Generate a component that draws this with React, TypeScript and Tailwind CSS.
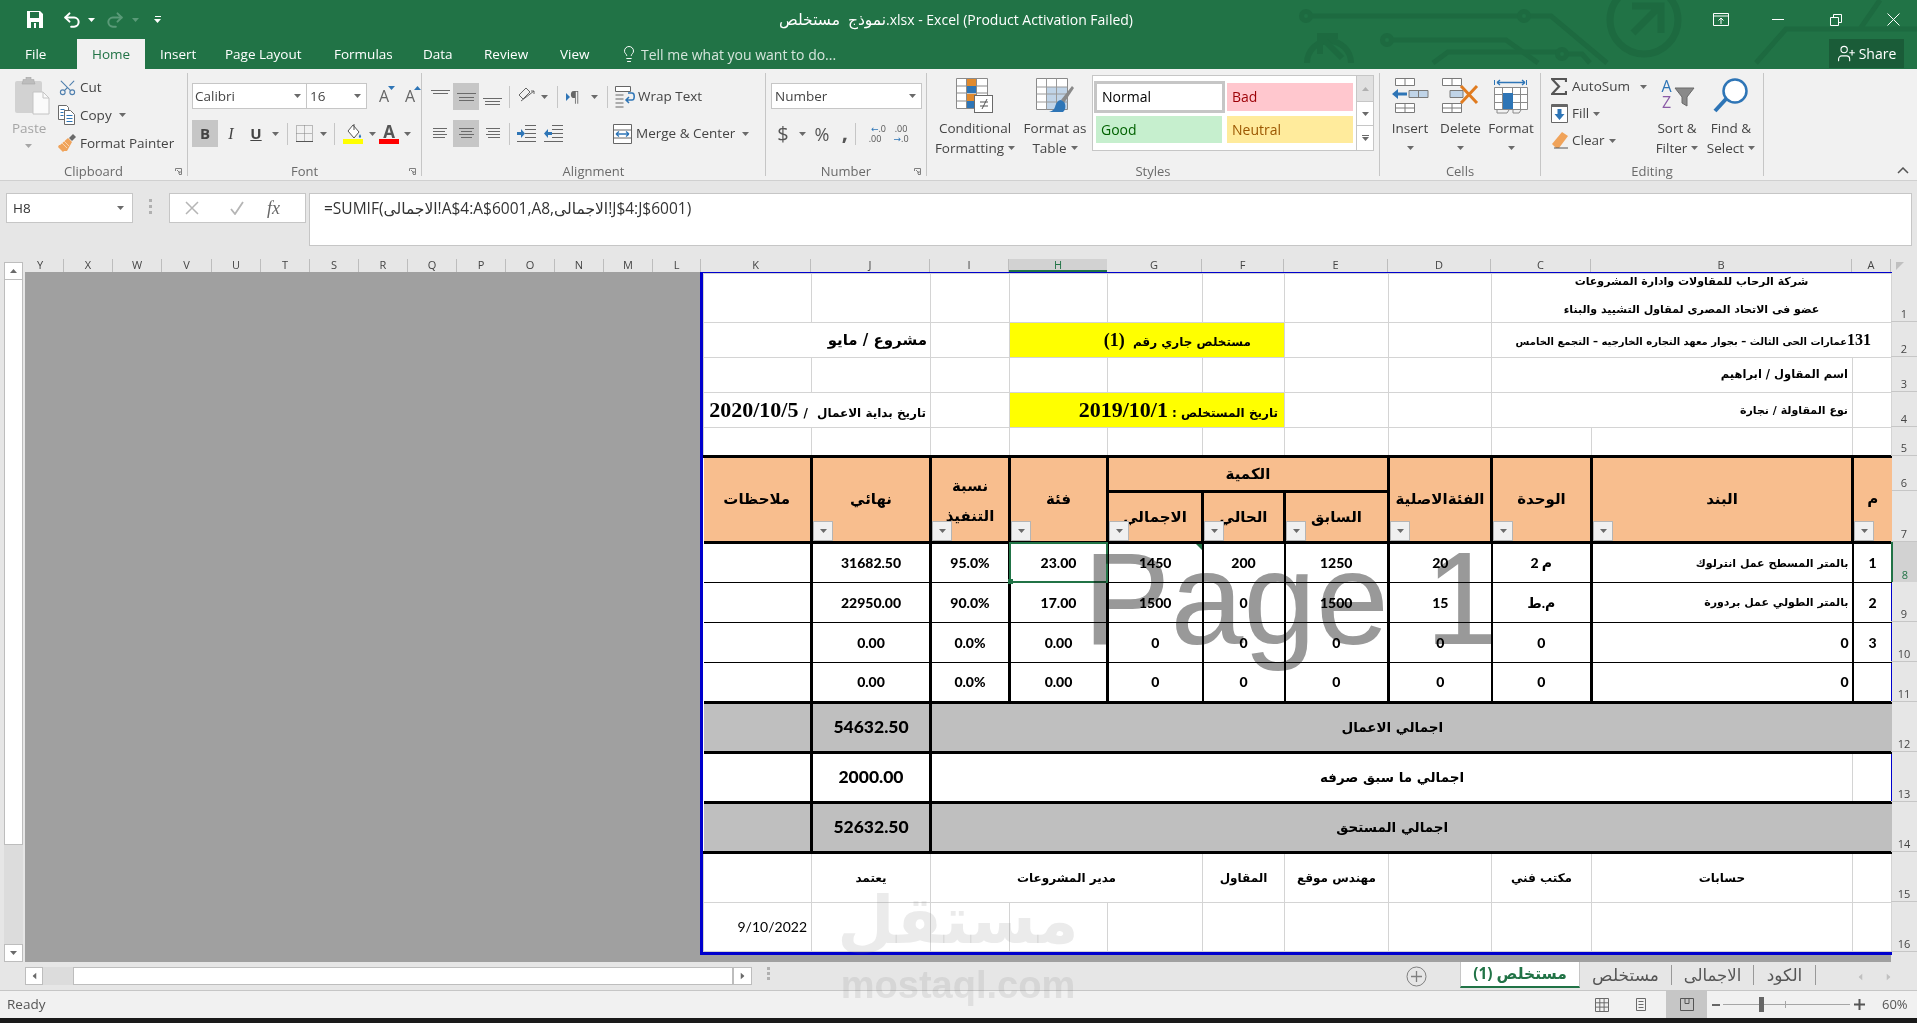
import React from 'react'
import { Lightbulb, Redo2, Scissors, Undo2, UserPlus } from 'lucide-react'

const Caret = ({ className = '', color = '#6a6a6a' }: { className?: string; color?: string }) => (
  <svg width="7" height="4" viewBox="0 0 7 4" className={`shrink-0 ${className}`}>
    <path d="M0 0h7L3.5 4z" fill={color} />
  </svg>
)

const Launcher = () => (
  <svg width="7" height="7" viewBox="0 0 7 7" className="absolute right-[5px] bottom-[1px]">
    <path d="M.5 3V.5H6.5V6.5H4M2 2l3 3M5 3v2H3" fill="none" stroke="#808080" />
  </svg>
)

const Sep = ({ className = '' }: { className?: string }) => <div className={`w-px bg-[#c6c6c6] h-[22px] shrink-0 ${className}`} />

// horizontal strokes of the align buttons
const Lines = ({ rows }: { rows: number[][] }) => (
  <svg width="19" height="18" viewBox="0 0 19 18">
    {rows.map((r, i) => (
      <path key={i} d={`M${r[1]} ${r[0]}.5H${r[2]}`} stroke="#6a6a6a" />
    ))}
  </svg>
)

const Group = ({ label, className, launcher, children }: { label: string; className: string; launcher?: boolean; children: React.ReactNode }) => (
  <div className={`relative flex flex-col h-[103px] border-r border-[#c6c6c6] shrink-0 ${className}`}>
    <div className="flex-1 flex min-h-0">{children}</div>
    <div className="h-[10px] leading-[10px] text-center text-[13px] text-[#6a6a6a]">{label}</div>
    {launcher && <Launcher />}
  </div>
)

const BigBtn = ({ icon, lines, className, caretLine }: { icon: React.ReactNode; lines: string[]; className: string; caretLine?: boolean }) => (
  <div className={`flex flex-col items-center shrink-0 text-[13.5px] text-[#444] ${className}`}>
    <div className="h-[45px] pt-[5px] flex items-start justify-center">{icon}</div>
    <div className="h-[20px] leading-[20px] whitespace-nowrap">{lines[0]}</div>
    <div className="h-[20px] flex items-center gap-[4px] whitespace-nowrap">
      {lines[1]}
      {caretLine && <Caret />}
    </div>
  </div>
)

const CondIcon = () => (
  <svg width="38" height="35" viewBox="0 0 38 35">
    <path d="M.5.5h31v30H.5zM.5 8h31M.5 15h31M.5 23h31M10.5.5v30M20.5.5v30" fill="#fff" stroke="#8a8a8a" />
    <rect x="11" y="1" width="9" height="7" fill="#e08a2e" />
    <rect x="11" y="8" width="9" height="7" fill="#2e75b6" />
    <rect x="11" y="16" width="9" height="7" fill="#e08a2e" />
    <rect x="11" y="23" width="9" height="7" fill="#2e75b6" />
    <rect x="18.5" y="17.5" width="18" height="17" fill="#fff" stroke="#6a6a6a" />
    <path d="M24 24h8M24 28h8M31 21l-5 10" stroke="#555" fill="none" />
  </svg>
)

const TableIcon = () => (
  <svg width="38" height="35" viewBox="0 0 38 35">
    <path d="M.5.5h31v31H.5z" fill="#fff" stroke="#8a8a8a" />
    <rect x="11" y="9" width="20" height="22" fill="#c0d4e8" />
    <path d="M.5 9h31M.5 16h31M.5 24h31M10.5.5v31M20.5.5v31" stroke="#9a9a9a" fill="none" />
    <path d="M25 22L36 8l2 2-10 15z" fill="#8a8a8a" />
    <path d="M25 22c-3 0-5 3-6 7 -1 3-3 4-6 5h14c3-2 3-8 1-10z" fill="#2e75b6" />
  </svg>
)

const InsertIcon = () => (
  <svg width="37" height="35" viewBox="0 0 37 35">
    <path d="M3.5.5h19v7h-19zM13 .5v7M3.5 25.5h19v9h-19zM13 25.5v9M3.5 30h19" fill="#fff" stroke="#7a7a7a" />
    <path d="M17 12.5h19v7H17zM26.5 12.5v7" fill="#c0d4e8" stroke="#7a7a7a" />
    <path d="M0 16l6-5v3.5h9v3H6V21z" fill="#2e75b6" />
  </svg>
)

const DeleteIcon = () => (
  <svg width="37" height="35" viewBox="0 0 37 35">
    <path d="M.5.5h19v7H.5zM10 .5v7M.5 25.5h19v9H.5zM10 25.5v9M.5 30h19" fill="#fff" stroke="#7a7a7a" />
    <path d="M8 12.5h13v7H8z" fill="#c0d4e8" stroke="#7a7a7a" />
    <path d="M19 8l16 17M35 8L19 25" stroke="#e07b1f" strokeWidth="3" />
  </svg>
)

const FormatIcon = () => (
  <svg width="36" height="36" viewBox="0 0 36 36">
    <path d="M1.5 2v5M33.5 2v5" stroke="#2e75b6" />
    <path d="M4 4.500h28M4 4.500l3-2.500M4 4.500l3 2.500M32 4.500l-3-2.500M32 4.500l-3 2.500" stroke="#2e75b6" fill="none" strokeWidth="1.300" />
    <path d="M1.500 9.500h33v22h-33zM1.500 16.500h33M1.500 24.500h33M9.500 9.500v22M19.500 9.500v22M27.500 9.500v22" fill="#fff" stroke="#8a8a8a" />
    <rect x="10" y="15" width="10" height="16" fill="#2e75b6" />
    <path d="M4 32v3h10l2-3M20 32v3h6l2-3" fill="none" stroke="#8a8a8a" />
  </svg>
)

const SortIcon = () => (
  <div className="flex w-[36px] h-[33px] relative">
    <div className="flex flex-col w-[15px] text-[16px] leading-[16px] text-center">
      <span className="text-[#2e75b6]">A</span>
      <span className="text-[#8a5ba6]">Z</span>
    </div>
    <svg width="21" height="21" viewBox="0 0 21 21" className="mt-[9px]">
      <path d="M1 1h19l-7 9v9l-5-3v-6z" fill="#8a8a8a" stroke="#6a6a6a" />
    </svg>
  </div>
)

const Paste = () => (
  <svg width="35" height="39" viewBox="0 0 35 39">
    <rect x="0" y="4" width="27" height="32" rx="2" fill="#d2d2d2" />
    <path d="M8 4V2.500h3V0h5v2.500h3V4l1 3H7z" fill="#bdbdbd" stroke="#aaa" strokeWidth=".6" />
    <path d="M18 15h10l6 6v16H18z" fill="#fafafa" stroke="#c4c4c4" />
    <path d="M28 15v6h6" fill="none" stroke="#c4c4c4" />
  </svg>
)

const CopyIcon = () => (
  <svg width="17" height="20" viewBox="0 0 17 20">
    <path d="M.5.5h8l2 2v3H6.500v9h-6z" fill="#fff" stroke="#6a6a6a" />
    <path d="M6.500 5.500h6l4 4v10h-10z" fill="#fff" stroke="#6a6a6a" />
    <path d="M2.500 4.500h4M2.500 7.500h3M2.500 10.500h3M8.500 10.500h6M8.500 13.500h6M8.500 16.500h6" stroke="#2e75b6" />
  </svg>
)

const Painter = () => (
  <svg width="18" height="18" viewBox="0 0 18 18">
    <path d="M11 4l3 3 4-4-3-3z" fill="#6a6a6a" />
    <path d="M10 4l4 4-5 9H6l-1 1-5-5 1-2h1z" fill="#f0a35a" />
    <path d="M4 9l5 5M6 7l5 5" stroke="#fbd3ab" />
  </svg>
)

const Undo = () => <Undo2 size={20} strokeWidth={2.4} color="#fff" />

const Circuit = () => (
  <svg viewBox="0 0 1917 69" width="1917" height="69" className="absolute inset-0 pointer-events-none">
    <g fill="none" stroke="#1d6a40" strokeWidth="5">
      <circle cx="1306" cy="16" r="4.500" />
      <path d="M1311 16H1520M1529 16H1551L1607 63" />
      <circle cx="1524" cy="16" r="4.500" />
      <circle cx="1387" cy="40" r="4.500" />
      <path d="M1392 40H1506L1538 63" />
      <path d="M1433 63L1448 52H1557M1567 54H1582L1590 63" />
      <circle cx="1562" cy="54" r="4.500" />
      <circle cx="1644" cy="20" r="34" strokeWidth="7" />
      <path d="M1633 33L1660 6M1632 6H1661V33" strokeWidth="7" />
      <path d="M1307 63A21 21 0 1 1 1351 63" strokeWidth="6" />
      <path d="M1342 58L1320 36M1320 54V36H1338" strokeWidth="6" />
      <path d="M1756 63L1786 29H1917M1860 29L1880 0" />
    </g>
  </svg>
)

const TitleBar = () => (
  <div className="relative h-[69px] bg-[#217346] text-white shrink-0">
    <Circuit />
    <div className="relative flex items-center h-[39px]">
      <svg width="16" height="17" viewBox="0 0 16 17" className="ml-[27px]">
        <path d="M0 0h13l3 3v14H0z" fill="#fff" />
        <rect x="3" y="1" width="9" height="6" fill="#217346" />
        <rect x="4" y="11" width="8" height="6" fill="#217346" />
        <rect x="7" y="12" width="2" height="5" fill="#fff" />
      </svg>
      <div className="ml-[19px]"><Undo /></div>
      <Caret color="#fff" className="ml-[6px]" />
      <div className="ml-[10px]"><Redo2 size={20} strokeWidth={2.4} color="#5a9a78" /></div>
      <Caret color="#5a9a78" className="ml-[7px]" />
      <div className="ml-[15px] flex flex-col items-center gap-[2px]">
        <div className="w-[6px] h-px bg-white" />
        <Caret color="#fff" />
      </div>
      <div className="ml-[618px] w-[360px] text-[14px] whitespace-nowrap">
        <span className="inline-block w-[107px] text-[15.5px] leading-none [word-spacing:4px]">نموذج مستخلص</span>.xlsx - Excel (Product Activation Failed)
      </div>
      <svg width="16" height="13" viewBox="0 0 16 13" className="ml-[574px]">
        <path d="M.5.5h15v12H.5zM.5 3h15M8 11V5M5.500 7.500L8 5l2.500 2.500" fill="none" stroke="#fff" />
      </svg>
      <div className="ml-[43px] w-[12px] h-px bg-white" />
      <svg width="12" height="12" viewBox="0 0 12 12" className="ml-[46px]">
        <path d="M.5 3.500h8v8h-8zM3.500 3.500V.5h8v8h-3" fill="none" stroke="#fff" />
      </svg>
      <svg width="13" height="13" viewBox="0 0 13 13" className="ml-[45px]">
        <path d="M.5.5l12 12M12.500.5l-12 12" stroke="#fff" />
      </svg>
    </div>
    <div className="relative flex items-start h-[30px] text-[13.5px]">
      <div className="w-[77px] h-[30px] pl-[25px] leading-[30px]">File</div>
      <div className="w-[68px] h-[30px] bg-[#f1f1f1] text-[#217346] text-center leading-[30px]">Home</div>
      <div className="w-[65px] pl-[15px] leading-[30px]">Insert</div>
      <div className="w-[109px] pl-[15px] leading-[30px]">Page Layout</div>
      <div className="w-[89px] pl-[15px] leading-[30px]">Formulas</div>
      <div className="w-[61px] pl-[15px] leading-[30px]">Data</div>
      <div className="w-[76px] pl-[15px] leading-[30px]">Review</div>
      <div className="w-[62px] pl-[15px] leading-[30px]">View</div>
      <div className="flex items-center w-[1222px] h-[30px] pl-[13px] gap-[3px] text-[#d5e5dc] text-[14px]">
        <Lightbulb size={18} strokeWidth={1.3} color="#fff" />
        <span>Tell me what you want to do...</span>
      </div>
      <div className="flex items-center justify-center gap-[3px] w-[75px] h-[29px] bg-[#1a5c38]">
        <UserPlus size={19} strokeWidth={1.4} color="#fff" />
        <span className="text-[14px]">Share</span>
      </div>
    </div>
  </div>
)

const Clipboard = () => (
  <Group label="Clipboard" launcher className="w-[188px]">
    <div className="w-[58px] flex flex-col pl-[15px] pt-[4px] shrink-0">
      <Paste />
      <div className="text-[13.5px] text-[#a6a6a6] leading-[20px] mt-[2px] -ml-[3px]">Paste</div>
      <Caret color="#a6a6a6" className="ml-[10px] mt-[6px]" />
    </div>
    <div className="flex flex-col text-[13.5px] text-[#444]">
      {[
        { label: 'Cut', icon: <Scissors size={19} strokeWidth={1.4} color="#4f7fae" className="-rotate-90" /> },
        { label: 'Copy', icon: <CopyIcon />, caret: true },
        { label: 'Format Painter', icon: <Painter /> },
      ].map((row) => (
        <div key={row.label} className="h-[28px] flex items-center whitespace-nowrap">
          <div className="w-[22px] flex justify-start">{row.icon}</div>
          <span>{row.label}</span>
          {row.caret && <Caret className="ml-[7px]" />}
        </div>
      ))}
    </div>
  </Group>
)

const FontGroup = () => (
  <Group label="Font" launcher className="w-[234px]">
    <div className="pl-[4px] pt-[10px] text-[#444]">
      <div className="flex items-center h-[26px]">
        <div className="w-[115px] h-[26px] bg-white border border-[#c6c6c6] flex items-center justify-between px-[2px] pr-[5px] text-[13.5px]">
          Calibri <Caret />
        </div>
        <div className="w-[60px] h-[26px] bg-white border border-l-0 border-[#c6c6c6] flex items-center justify-between px-[3px] pr-[5px] text-[13.5px]">
          16 <Caret />
        </div>
        <div className="ml-[8px] w-[18px] text-[16px] relative text-[#666] text-center">
          A<Caret color="#2e75b6" className="absolute right-[-2px] top-[2px]" />
        </div>
        <div className="ml-[8px] w-[18px] text-[16px] relative text-[#666] text-center">
          A<Caret color="#2e75b6" className="absolute right-[-2px] top-[2px] rotate-180" />
        </div>
      </div>
      <div className="flex items-center h-[27px] mt-[11px]">
        <div className="w-[26px] h-[27px] bg-[#c6c6c6] flex items-center justify-center font-bold text-[15px]">B</div>
        <div className="w-[26px] text-center italic text-[16px] font-['Liberation_Serif']">I</div>
        <div className="w-[24px] text-center font-bold text-[15px] underline">U</div>
        <Caret className="ml-[4px]" />
        <Sep className="ml-[8px]" />
        <svg width="17" height="17" viewBox="0 0 17 17" className="ml-[8px]">
          <path d="M.5.5h16v16H.5zM8.500.5v16M.5 8.500h16" fill="none" stroke="#808080" strokeDasharray="1 1" />
          <path d="M0 16.500h17" stroke="#555" />
        </svg>
        <Caret className="ml-[7px]" />
        <Sep className="ml-[7px]" />
        <div className="ml-[8px] w-[20px] flex flex-col items-center">
          <svg width="17" height="15" viewBox="0 0 17 15">
            <path d="M8 1l6 7-5 6-6-7z" fill="#fff" stroke="#555" />
            <path d="M15 10c1 2 2 3 0 4-2-1-1-2 0-4z" fill="#2e75b6" />
            <path d="M9 0v6" stroke="#555" />
          </svg>
          <div className="w-[20px] h-[5px] bg-[#ffff00]" />
        </div>
        <Caret className="ml-[6px]" />
        <div className="ml-[3px] w-[20px] flex flex-col items-center text-[17px] leading-[15px] font-bold text-[#555]">
          A
          <div className="w-[20px] h-[5px] bg-[#ff0000]" />
        </div>
        <Caret className="ml-[5px]" />
      </div>
    </div>
  </Group>
)

const Alignment = () => (
  <Group label="Alignment" className="w-[344px]">
    <div className="pl-[5px] pt-[10px] text-[13.5px] text-[#444]">
      <div className="flex items-center h-[27px]">
        <div className="w-[26px] flex justify-center"><Lines rows={[[2, 0, 19], [5, 2, 17]]} /></div>
        <div className="w-[26px] h-[27px] bg-[#c6c6c6] flex items-center justify-center"><Lines rows={[[5, 0, 19], [9, 2, 17], [12, 2, 17]]} /></div>
        <div className="w-[26px] flex justify-center"><Lines rows={[[10, 0, 19], [13, 2, 17], [16, 2, 17]]} /></div>
        <Sep className="ml-[4px]" />
        <svg width="20" height="19" viewBox="0 0 20 19" className="ml-[7px]">
          <path d="M2 8l7-7 4 4-7 7zM4 14L17 4M14 4h3v3" fill="none" stroke="#666" />
        </svg>
        <Caret className="ml-[4px]" />
        <Sep className="ml-[9px]" />
        <div className="ml-[8px] w-[16px] text-[15px] leading-none text-[#666] relative pl-[4px]">
          ¶
          <svg width="4" height="8" viewBox="0 0 4 8" className="absolute left-0 top-[4px]"><path d="M0 0l4 4-4 4z" fill="#2e75b6" /></svg>
        </div>
        <Caret className="ml-[9px]" />
        <Sep className="ml-[9px]" />
        <svg width="20" height="22" viewBox="0 0 20 22" className="ml-[7px]">
          <path d="M.5.5h15v5H.5zM.5 9h8M.5 13h8M.5 17h8M.5 21h8" fill="#fff" stroke="#666" />
          <path d="M13 7h4c3 0 3 7 0 7h-5M14 11l-3 3 3 3" fill="none" stroke="#2e75b6" strokeWidth="1.500" />
        </svg>
        <span className="ml-[3px] whitespace-nowrap">Wrap Text</span>
      </div>
      <div className="flex items-center h-[27px] mt-[10px]">
        <div className="w-[26px] flex justify-center"><Lines rows={[[3, 2, 16], [6, 2, 14], [9, 2, 16], [12, 2, 14]]} /></div>
        <div className="w-[26px] h-[27px] bg-[#c6c6c6] flex items-center justify-center"><Lines rows={[[3, 2, 17], [6, 4, 15], [9, 2, 17], [12, 4, 15]]} /></div>
        <div className="w-[26px] flex justify-center"><Lines rows={[[3, 3, 17], [6, 5, 17], [9, 3, 17], [12, 5, 17]]} /></div>
        <Sep className="ml-[4px]" />
        <svg width="19" height="17" viewBox="0 0 19 17" className="ml-[7px]">
          <path d="M8 .5h11M8 4.500h11M8 8.500h11M8 12.500h11M0 16.500h19" stroke="#666" />
          <path d="M0 7h4V4l4 4.500L4 13v-3H0z" fill="#2e75b6" />
        </svg>
        <svg width="19" height="17" viewBox="0 0 19 17" className="ml-[8px]">
          <path d="M8 .5h11M8 4.500h11M8 8.500h11M8 12.500h11M0 16.500h19" stroke="#666" />
          <path d="M8 7H4V4L0 8.500 4 13v-3h4z" fill="#2e75b6" />
        </svg>
        <div className="w-[50px]" />
        <svg width="20" height="20" viewBox="0 0 20 20">
          <path d="M.5.5h18v19H.5zM.5 6h18M.5 14h18" fill="#fff" stroke="#666" />
          <path d="M3 10h13M3 10l3-2.500M3 10l3 2.500M16 10l-3-2.500M16 10l-3 2.500" fill="none" stroke="#2e75b6" strokeWidth="1.300" />
        </svg>
        <span className="ml-[3px] whitespace-nowrap">Merge &amp; Center</span>
        <Caret className="ml-[7px]" />
      </div>
    </div>
  </Group>
)

const NumberGroup = () => (
  <Group label="Number" launcher className="w-[161px]">
    <div className="pl-[5px] pt-[10px] text-[#444]">
      <div className="w-[151px] h-[26px] bg-white border border-[#c6c6c6] flex items-center justify-between pl-[3px] pr-[5px] text-[13.5px]">
        Number <Caret />
      </div>
      <div className="flex items-center h-[27px] mt-[11px] text-[#555]">
        <div className="w-[24px] text-center text-[20px] leading-none">$</div>
        <Caret className="ml-[4px]" />
        <div className="ml-[6px] w-[20px] text-center text-[18px] leading-none">%</div>
        <div className="ml-[6px] w-[14px] text-center text-[22px] font-bold leading-none -mt-[6px]">,</div>
        <Sep className="ml-[3px]" />
        <div className="ml-[8px] w-[22px] text-[9px] leading-[10px] text-center">
          <div className="text-right"><span className="text-[#2e75b6]">←</span>.0</div>.00
        </div>
        <div className="ml-[4px] w-[22px] text-[9px] leading-[10px] text-center">
          .00
          <div><span className="text-[#2e75b6]">→</span>.0</div>
        </div>
      </div>
    </div>
  </Group>
)

const Gallery = () => (
  <div className="w-[282px] h-[76px] mt-[2px] ml-[1px] bg-white border border-[#c6c6c6] flex shrink-0">
    <div className="grid grid-cols-2 grid-rows-2 w-[263px] pl-[3px] pt-[7px] pb-[7px] pr-[3px] gap-x-[5px] gap-y-[5px] text-[14px]">
      <div className="bg-white border-[3px] border-[#c6c6c6] -mt-[2px] -ml-[2px] mr-[-3px] -mb-[2px] flex items-center pl-[5px] text-black">Normal</div>
      <div className="bg-[#ffc7ce] text-[#9c0006] flex items-center pl-[5px]">Bad</div>
      <div className="bg-[#c6efce] text-[#006100] flex items-center pl-[5px]">Good</div>
      <div className="bg-[#ffeb9c] text-[#9c5700] flex items-center pl-[5px]">Neutral</div>
    </div>
    <div className="flex-1 flex flex-col border-l border-[#c6c6c6]">
      <div className="h-[26px] bg-[#e1e1e1] border-b border-[#c6c6c6] flex items-center justify-center"><Caret color="#b0b0b0" className="rotate-180" /></div>
      <div className="h-[24px] border-b border-[#c6c6c6] flex items-center justify-center"><Caret /></div>
      <div className="flex-1 flex flex-col items-center justify-center gap-[1px]">
        <div className="w-[7px] h-px bg-[#6a6a6a]" />
        <Caret />
      </div>
    </div>
  </div>
)

const Ribbon = () => (
  <div className="h-[112px] bg-[#f1f1f1] border-b border-[#d0d0d0] pt-[4px] flex relative shrink-0">
    <Clipboard />
    <FontGroup />
    <Alignment />
    <NumberGroup />
    <Group label="Styles" className="w-[453px]">
      <BigBtn icon={<CondIcon />} lines={['Conditional', 'Formatting']} caretLine className="w-[88px] ml-[4px]" />
      <BigBtn icon={<TableIcon />} lines={['Format as', 'Table']} caretLine className="w-[72px]" />
      <Gallery />
    </Group>
    <Group label="Cells" className="w-[161px]">
      <BigBtn icon={<InsertIcon />} lines={['Insert', '']} caretLine className="w-[50px] ml-[5px]" />
      <BigBtn icon={<DeleteIcon />} lines={['Delete', '']} caretLine className="w-[51px]" />
      <BigBtn icon={<FormatIcon />} lines={['Format', '']} caretLine className="w-[50px]" />
    </Group>
    <Group label="Editing" className="w-[223px]">
      <div className="w-[110px] pl-[10px] flex flex-col text-[13.5px] text-[#444] shrink-0">
        <div className="h-[27px] flex items-center whitespace-nowrap">
          <svg width="16" height="17" viewBox="0 0 16 17"><path d="M15 4V1H1l7 7.500L1 16h14v-3" fill="none" stroke="#555" strokeWidth="2.200" /></svg>
          <span className="ml-[5px]">AutoSum</span>
          <Caret className="ml-[10px]" />
        </div>
        <div className="h-[27px] flex items-center">
          <svg width="17" height="19" viewBox="0 0 17 19">
            <path d="M.5.5h16v18H.5z" fill="#fff" stroke="#666" />
            <path d="M.5 2h16" stroke="#666" strokeWidth="2" />
            <path d="M6.500 5h4v5h3L8.500 16 3.500 10h3z" fill="#2e75b6" />
          </svg>
          <span className="ml-[4px]">Fill</span>
          <Caret className="ml-[4px]" />
        </div>
        <div className="h-[27px] flex items-center">
          <svg width="18" height="18" viewBox="0 0 18 18">
            <path d="M1 12L11 0l6 4L8 16H5z" fill="#f0a35a" />
            <path d="M3 16h14" stroke="#555" />
          </svg>
          <span className="ml-[3px]">Clear</span>
          <Caret className="ml-[4px]" />
        </div>
      </div>
      <BigBtn icon={<SortIcon />} lines={['Sort &', 'Filter']} caretLine className="w-[52px]" />
      <BigBtn
        icon={
          <svg width="36" height="35" viewBox="0 0 36 35">
            <circle cx="22" cy="13" r="11.500" fill="#fff" stroke="#2e75b6" strokeWidth="2.500" />
            <path d="M2 33l11-12" stroke="#2e75b6" strokeWidth="4" />
          </svg>
        }
        lines={['Find &', 'Select']}
        caretLine
        className="w-[52px] ml-[2px]"
      />
    </Group>
    <svg width="12" height="7" viewBox="0 0 12 7" className="absolute right-[8px] bottom-[6px]">
      <path d="M1 6l5-5 5 5" fill="none" stroke="#555" strokeWidth="1.500" />
    </svg>
  </div>
)

const FormulaBar = () => (
  <div className="h-[78px] bg-[#e6e6e6] flex items-start pt-[12px] shrink-0">
    <div className="ml-[6px] w-[127px] h-[30px] bg-white border border-[#c6c6c6] flex items-center justify-between pl-[6px] pr-[8px] text-[13.5px] text-[#333]">
      H8 <Caret />
    </div>
    <div className="ml-[15px] w-[5px] flex flex-col items-center gap-[3px] pt-[6px]">
      <div className="w-[3px] h-[3px] bg-[#b0b0b0]" />
      <div className="w-[3px] h-[3px] bg-[#b0b0b0]" />
      <div className="w-[3px] h-[3px] bg-[#b0b0b0]" />
    </div>
    <div className="ml-[16px] w-[137px] h-[30px] bg-white border border-[#c6c6c6] flex items-center text-[#b0b0b0]">
      <svg width="14" height="14" viewBox="0 0 14 14" className="ml-[15px]"><path d="M1 1l12 12M13 1L1 13" stroke="#b5b5b5" strokeWidth="1.500" /></svg>
      <svg width="14" height="14" viewBox="0 0 14 14" className="ml-[31px]"><path d="M1 8l4 5 8-12" fill="none" stroke="#b5b5b5" strokeWidth="1.800" /></svg>
      <span className="ml-[23px] font-['Liberation_Serif'] italic text-[18px] text-[#666]">fx</span>
    </div>
    <div className="ml-[3px] w-[1603px] h-[53px] bg-white border border-[#c6c6c6] pl-[14px] pt-[3px] text-[15.5px] text-[#333] whitespace-nowrap">
      =SUMIF(الاجمالى!A$4:A$6001,A8,الاجمالى!J$4:J$6001)
    </div>
  </div>
)

const ColHeaders = () => (
  <div className="flex h-[13px] text-[11px] leading-[12px] text-[#444] text-center">
    {[
      ['Y', 'w-[39px] pr-[8px]'], ['X', 'w-[49px]'], ['W', 'w-[49px]'], ['V', 'w-[50px]'], ['U', 'w-[49px]'], ['T', 'w-[49px]'], ['S', 'w-[49px]'],
      ['R', 'w-[49px]'], ['Q', 'w-[49px]'], ['P', 'w-[49px]'], ['O', 'w-[49px]'], ['N', 'w-[49px]'], ['M', 'w-[49px]'], ['L', 'w-[48px]'],
      ['K', 'w-[110px]'], ['J', 'w-[119px]'], ['I', 'w-[79px]'],
    ].map(([c, w]) => (
      <div key={c} className={`${w} border-r border-[#bdbdbd]`}>{c}</div>
    ))}
    <div className="w-[98px] bg-[#d2d2d2] border-b-2 border-[#217346] text-[#217346]">H</div>
    {[
      ['G', 'w-[95px]'], ['F', 'w-[82px]'], ['E', 'w-[104px]'], ['D', 'w-[103px]'], ['C', 'w-[100px]'], ['B', 'w-[261px]'], ['A', 'w-[39px]'],
    ].map(([c, w]) => (
      <div key={c} className={`${w} border-r border-[#bdbdbd]`}>{c}</div>
    ))}
  </div>
)

const grid = 'border border-[#d4d4d4] p-0 align-middle leading-none overflow-hidden'
const head = 'border-[3px] border-black p-0 align-middle bg-[#f8be8e] font-bold text-[15px] text-center relative text-black'
const numFont = '[font-family:Lato,DejaVu_Sans,sans-serif]'
const bodyBorder = [
  'border-r-[3px]', 'border-r-[3px]', 'border-r-[3px]', 'border-r-[3px]', 'border-r-2', 'border-r-2',
  'border-r-[3px]', 'border-r-2', 'border-r-[3px]', 'border-r-2', 'border-r-0',
]

const Filter = () => (
  <div className="absolute left-0 bottom-0 w-[20px] h-[20px] bg-[#f0f0f0] border border-[#b5b5b5] flex items-center justify-center">
    <Caret />
  </div>
)

const dataRows = [
  ['', '31682.50', '95.0%', '23.00', '1450', '200', '1250', '20', '2 م', 'بالمتر المسطح عمل انترلوك', '1'],
  ['', '22950.00', '90.0%', '17.00', '1500', '0', '1500', '15', 'م.ط', 'بالمتر الطولي عمل بردورة', '2'],
  ['', '0.00', '0.0%', '0.00', '0', '0', '0', '0', '0', '0', '3'],
  ['', '0.00', '0.0%', '0.00', '0', '0', '0', '0', '0', '0', ''],
]

const Blank = ({ n }: { n: number }) => (
  <>
    {Array.from({ length: n }).map((_, i) => (
      <td key={i} className={grid} />
    ))}
  </>
)

const Sheet = () => (
  <div className="ml-[675px] w-[1192px] border-l-[3px] border-b-[3px] border-r border-t border-[#0000cd] bg-white">
    <table className="table-fixed border-collapse w-[1188px] [font-family:'DejaVu_Sans',sans-serif] text-black">
      <colgroup>
        <col className="w-[108px]" />
        <col className="w-[119px]" />
        <col className="w-[79px]" />
        <col className="w-[98px]" />
        <col className="w-[95px]" />
        <col className="w-[82px]" />
        <col className="w-[104px]" />
        <col className="w-[103px]" />
        <col className="w-[100px]" />
        <col className="w-[261px]" />
        <col className="w-[39px]" />
      </colgroup>
      <tbody>
        <tr className="h-[49px]">
          <Blank n={8} />
          <td colSpan={3} className={grid} dir="rtl">
            <div className="flex flex-col items-center gap-[17px] font-bold text-[11px] -mt-[6px]">
              <div>شركة الرحاب للمقاولات وادارة المشروعات</div>
              <div>عضو فى الاتحاد المصرى لمقاول التشييد والبناء</div>
            </div>
          </td>
        </tr>
        <tr className="h-[35px]">
          <td colSpan={2} className={`${grid} font-bold text-[15px] pr-[3px]`} dir="rtl">مشروع / مايو</td>
          <Blank n={1} />
          <td colSpan={3} className={`${grid} bg-[#ffff00] font-bold text-[12px] pr-[33px] whitespace-nowrap`} dir="rtl">
            مستخلص جاري  رقم <span className="text-[18px] mr-[4px] [font-family:'Liberation_Serif']">(1)</span>
          </td>
          <Blank n={2} />
          <td colSpan={3} className={`${grid} font-bold text-[10px] pr-[20px]`} dir="rtl">
            <span className="text-[16px] [font-family:'Liberation_Serif']">131</span>عمارات الحى الثالث – بجوار معهد التجاره الخارجيه – التجمع الخامس
          </td>
        </tr>
        <tr className="h-[35px]">
          <Blank n={8} />
          <td colSpan={2} className={`${grid} font-bold text-[11.5px] pr-[4px]`} dir="rtl">اسم المقاول / ابراهيم</td>
          <Blank n={1} />
        </tr>
        <tr className="h-[35px]">
          <td colSpan={2} className={`${grid} pr-[4px] font-bold text-[12px] whitespace-nowrap`} dir="rtl">
            تاريخ بداية الاعمال <span className="mx-[5px]">/</span><span className="text-[22px] [font-family:'Liberation_Serif']">2020/10/5</span>
          </td>
          <Blank n={1} />
          <td colSpan={3} className={`${grid} bg-[#ffff00] pr-[6px] font-bold text-[12px] whitespace-nowrap`} dir="rtl">
            تاريخ المستخلص : <span className="text-[22px] [font-family:'Liberation_Serif']">2019/10/1</span>
          </td>
          <Blank n={2} />
          <td colSpan={2} className={`${grid} pr-[4px] font-bold text-[11px]`} dir="rtl">نوع المقاولة / نجارة</td>
          <Blank n={1} />
        </tr>
        <tr className="h-[29px]">
          <Blank n={11} />
        </tr>
        <tr className="h-[35px]">
          <td rowSpan={2} className={`${head} border-l-0`} dir="rtl">ملاحظات</td>
          <td rowSpan={2} className={head} dir="rtl">نهائي<Filter /></td>
          <td rowSpan={2} className={head} dir="rtl"><div className="leading-[30px] pt-[2px]">نسبة<br />التنفيذ</div><Filter /></td>
          <td rowSpan={2} className={head} dir="rtl">فئة<Filter /></td>
          <td colSpan={3} className={head} dir="rtl">الكمية</td>
          <td rowSpan={2} className={`${head} text-[12px] whitespace-nowrap`} dir="rtl">الفئةالاصلية<Filter /></td>
          <td rowSpan={2} className={head} dir="rtl">الوحدة<Filter /></td>
          <td rowSpan={2} className={head} dir="rtl">البند<Filter /></td>
          <td rowSpan={2} className={`${head} border-r-0`} dir="rtl">م<Filter /></td>
        </tr>
        <tr className="h-[51px]">
          <td className={`${head} text-[13px]`} dir="rtl">الاجمالي<Filter /></td>
          <td className={`${head} text-[14px]`} dir="rtl">الحالي<Filter /></td>
          <td className={`${head} text-[14px]`} dir="rtl">السابق<Filter /></td>
        </tr>
        {dataRows.map((row, r) => (
          <tr key={r} className="h-[40px]">
            {row.map((v, c) => (
              <td
                key={c}
                dir={c === 9 ? 'rtl' : undefined}
                className={`relative p-0 align-middle leading-none border-l-0 border-t border-t-black border-r-black ${bodyBorder[c]} ${r === 3 ? 'border-b-[3px]' : 'border-b'} border-b-black
                  ${c === 9 ? (v === '0' ? `text-right pr-[3px] text-[14px] font-black ${numFont}` : 'text-right pr-[3px] text-[11px] font-bold') : `text-center text-[14px] font-black ${numFont}`}`}
              >
                {c === 3 && r === 0 && <div className="absolute -left-[2px] -top-[2px] -right-[2px] -bottom-[1px] border-2 border-[#217346]"><div className="absolute -left-[3px] -bottom-[3px] w-[5px] h-[5px] bg-[#217346]" /></div>}
                {c === 4 && r === 0 && <div className="absolute right-0 top-0 w-0 h-0 border-t-[6px] border-l-[6px] border-t-[#217346] border-l-transparent" />}
                {v}
              </td>
            ))}
          </tr>
        ))}
        <tr className="h-[50px] bg-[#bfbfbf]">
          <td className="border-r-[3px] border-r-black border-b-[3px] border-b-black" />
          <td className={`border-r-[3px] border-r-black border-b-[3px] border-b-black text-center font-black text-[17.5px] ${numFont}`}>54632.50</td>
          <td colSpan={8} dir="rtl" className="border-b-[3px] border-b-black text-center font-bold text-[13.5px]">اجمالي الاعمال</td>
          <td className="border-b-[3px] border-b-black" />
        </tr>
        <tr className="h-[50px]">
          <td className="border-r-[3px] border-r-black border-b-[3px] border-b-black" />
          <td className={`border-r-[3px] border-r-black border-b-[3px] border-b-black text-center font-black text-[17.5px] ${numFont}`}>2000.00</td>
          <td colSpan={8} dir="rtl" className="border-b-[3px] border-b-black text-center font-bold text-[13.5px]">اجمالي ما سبق صرفه</td>
          <td className="border-b-[3px] border-b-black border-l border-l-[#d4d4d4]" />
        </tr>
        <tr className="h-[50px] bg-[#bfbfbf]">
          <td className="border-r-[3px] border-r-black border-b-[3px] border-b-black" />
          <td className={`border-r-[3px] border-r-black border-b-[3px] border-b-black text-center font-black text-[17.5px] ${numFont}`}>52632.50</td>
          <td colSpan={8} dir="rtl" className="border-b-[3px] border-b-black text-center font-bold text-[13.5px]">اجمالي المستحق</td>
          <td className="border-b-[3px] border-b-black" />
        </tr>
        <tr className="h-[50px] text-[12px] font-bold">
          <Blank n={1} />
          <td className={`${grid} text-center`} dir="rtl">يعتمد</td>
          <td colSpan={3} className={`${grid} text-center`} dir="rtl">مدير المشروعات</td>
          <td className={`${grid} text-center`} dir="rtl">المقاول</td>
          <td className={`${grid} text-center`} dir="rtl">مهندس موقع</td>
          <Blank n={1} />
          <td className={`${grid} text-center`} dir="rtl">مكتب فني</td>
          <td className={`${grid} text-center`} dir="rtl">حسابات</td>
          <Blank n={1} />
        </tr>
        <tr className="h-[49px]">
          <td className={`${grid} text-right pr-[4px] text-[14px] ${numFont}`}>9/10/2022</td>
          <Blank n={10} />
        </tr>
      </tbody>
    </table>
  </div>
)

const RowHeaders = () => (
  <div className="w-[26px] text-[11px] text-[#444] shrink-0">
    <div className="h-[13px] relative">
      <div className="absolute left-[5px] top-[3px] w-0 h-0 border-b-[8px] border-r-[8px] border-b-[#c0c0c0] border-r-transparent rotate-90" />
    </div>
    {[
      ['1', 'h-[50px]'], ['2', 'h-[35px]'], ['3', 'h-[35px]'], ['4', 'h-[35px]'], ['5', 'h-[29px]'], ['6', 'h-[35px]'], ['7', 'h-[51px]'],
    ].map(([n, h]) => (
      <div key={n} className={`${h} border-b border-[#c6c6c6] flex items-end justify-center leading-[14px]`}>{n}</div>
    ))}
    <div className="h-[40px] bg-[#d2d2d2] border-l-2 border-[#217346] text-[#217346] flex items-end justify-center leading-[14px]">8</div>
    {[
      ['9', 'h-[40px]'], ['10', 'h-[40px]'], ['11', 'h-[40px]'], ['12', 'h-[50px]'], ['13', 'h-[50px]'], ['14', 'h-[50px]'], ['15', 'h-[50px]'], ['16', 'h-[50px]'],
    ].map(([n, h]) => (
      <div key={n} className={`${h} border-b border-[#c6c6c6] flex items-end justify-center leading-[14px]`}>{n}</div>
    ))}
  </div>
)

const VScroll = () => (
  <div className="w-[25px] pl-[4px] pt-[3px] shrink-0">
    <div className="w-[19px] h-[700px] bg-[#dcdcdc] flex flex-col">
      <div className="h-[18px] bg-white border border-[#bdbdbd] flex items-center justify-center"><Caret className="rotate-180" /></div>
      <div className="h-[565px] bg-white border border-[#bdbdbd] border-t-0" />
      <div className="flex-1" />
      <div className="h-[18px] bg-white border border-[#bdbdbd] flex items-center justify-center"><Caret /></div>
    </div>
  </div>
)

const SheetTabs = () => (
  <div className="h-[29px] bg-[#e6e6e6] border-b border-[#c6c6c6] flex items-start shrink-0">
    <div className="ml-[25px] mt-[5px] flex h-[18px]">
      <div className="w-[18px] bg-white border border-[#bdbdbd] flex items-center justify-center"><Caret className="rotate-90" /></div>
      <div className="w-[30px] bg-[#dcdcdc]" />
      <div className="w-[660px] bg-white border border-[#bdbdbd]" />
      <div className="w-[19px] bg-white border border-[#bdbdbd] flex items-center justify-center"><Caret className="-rotate-90" /></div>
    </div>
    <div className="ml-[15px] mt-[5px] flex flex-col gap-[2px]">
      <div className="w-[3px] h-[3px] bg-[#b0b0b0]" />
      <div className="w-[3px] h-[3px] bg-[#b0b0b0]" />
      <div className="w-[3px] h-[3px] bg-[#b0b0b0]" />
    </div>
    <svg width="21" height="21" viewBox="0 0 21 21" className="ml-[636px] mt-[4px]">
      <circle cx="10.500" cy="10.500" r="9.500" fill="none" stroke="#808080" />
      <path d="M10.500 5v11M5 10.500h11" stroke="#808080" strokeWidth="1.300" />
    </svg>
    <div dir="rtl" className="ml-[33px] w-[120px] h-[26px] bg-white border-b-[2px] border-[#217346] border-x border-x-[#c6c6c6] flex items-center justify-center text-[15.5px] font-bold text-[#217346] whitespace-nowrap">مستخلص (1)</div>
    <div className="w-[92px] h-[20px] mt-[3px] border-r border-[#999] text-center text-[17px] leading-[20px] text-[#555]">مستخلص</div>
    <div className="w-[82px] h-[20px] mt-[3px] border-r border-[#999] text-center text-[16.5px] leading-[20px] text-[#555]">الاجمالى</div>
    <div className="w-[62px] h-[20px] mt-[3px] border-r border-[#999] text-center text-[17px] leading-[20px] text-[#555]">الكود</div>
    <Caret color="#c0c0c0" className="rotate-90 ml-[41px] mt-[13px]" />
    <Caret color="#c0c0c0" className="-rotate-90 ml-[21px] mt-[13px]" />
  </div>
)

const StatusBar = () => (
  <div className="h-[27px] bg-[#f1f1f1] flex items-center text-[13.5px] text-[#555] shrink-0">
    <span className="ml-[7px] w-[40px]">Ready</span>
    <svg width="14" height="14" viewBox="0 0 14 14" className="ml-[1548px]">
      <path d="M.5.5h13v13H.5zM.5 4.800h13M.5 9.100h13M4.800.5v13M9.100.5v13" fill="none" stroke="#6a6a6a" />
    </svg>
    <svg width="10" height="13" viewBox="0 0 10 13" className="ml-[27px]">
      <path d="M.5.5h9v12h-9zM2.500 3.500h5M2.500 6.500h5M2.500 9.500h5" fill="none" stroke="#6a6a6a" />
    </svg>
    <div className="ml-[20px] w-[41px] h-[27px] bg-[#c6c6c6] flex items-center justify-center">
      <svg width="14" height="13" viewBox="0 0 14 13"><path d="M.5.5h13v12H.5zM5 .5v5h4V.5" fill="none" stroke="#555" /></svg>
    </div>
    <div className="ml-[5px] w-[8px] h-[2px] bg-[#666]" />
    <div className="relative w-[127px] h-px bg-[#a6a6a6] ml-[3px]">
      <div className="absolute left-[36px] -top-[7px] w-[5px] h-[15px] bg-[#666]" />
      <div className="absolute left-[62px] -top-[3px] w-px h-[7px] bg-[#a6a6a6]" />
    </div>
    <svg width="11" height="11" viewBox="0 0 11 11" className="ml-[4px]"><path d="M5.500 0v11M0 5.500h11" stroke="#555" strokeWidth="2" /></svg>
    <span className="ml-[17px] text-[13px]">60%</span>
  </div>
)

const App = () => {
  return (
    <div className="relative w-[1917px] h-[1023px] overflow-hidden flex flex-col bg-[#e6e6e6] [font-family:'Open_Sans','DejaVu_Sans',sans-serif]">
      <TitleBar />
      <Ribbon />
      <FormulaBar />
      <div className="flex h-[703px] shrink-0">
        <VScroll />
        <div className="w-[1866px] flex flex-col">
          <ColHeaders />
          <div className="h-[690px] bg-[#a0a0a0]">
            <Sheet />
          </div>
        </div>
        <RowHeaders />
      </div>
      <SheetTabs />
      <StatusBar />
      <div className="h-[5px] bg-[#1a1a1a] shrink-0" />

      {/* page break preview watermark */}
      <div className="absolute left-[1083px] top-[520px] text-[131px] leading-[157px] text-[#999999] mix-blend-multiply whitespace-nowrap [font-family:'Liberation_Sans',sans-serif] pointer-events-none">
        Page 1
      </div>
      {/* mostaql logo over the shot */}
      <div className="absolute left-[842px] top-[877px] w-[232px] flex flex-col items-center text-[#80808029] pointer-events-none">
        <div className="text-[66px] leading-[88px] font-bold [font-family:'DejaVu_Sans',sans-serif]">مستقل</div>
        <div className="text-[38px] leading-[40px] font-bold [font-family:'Liberation_Sans',sans-serif]">mostaql.com</div>
      </div>
    </div>
  )
}

export default App
